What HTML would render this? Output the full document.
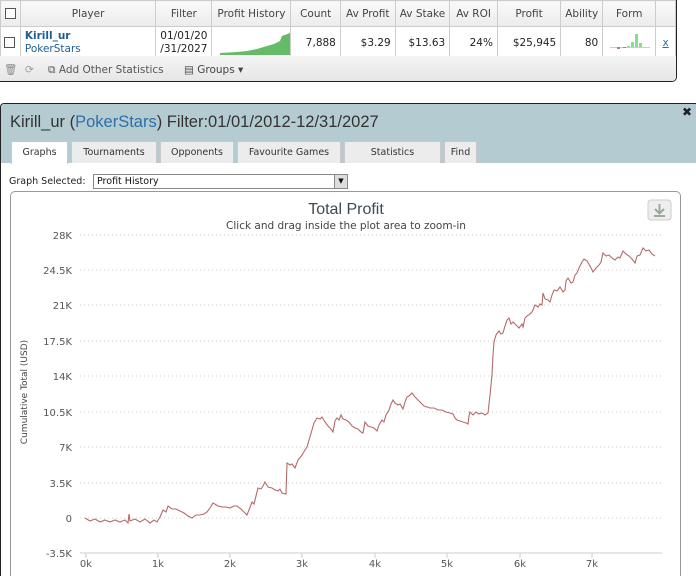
<!DOCTYPE html>
<html style="width:696px;height:576px;overflow:hidden"><head><meta charset="utf-8"><style>
*{margin:0;padding:0;box-sizing:border-box}
body{width:696px;height:576px;overflow:hidden;background:#fff;font-family:"DejaVu Sans","Liberation Sans",sans-serif;position:relative;color:#333}
.top{position:absolute;left:0;top:0;width:677px;height:82px;border:1px solid #222;border-top:none;border-left:none;border-radius:0 0 5px 0;background:#fff;overflow:hidden}
table{border-collapse:collapse;font-size:10.5px;position:absolute;left:0;top:0;table-layout:fixed}
td{border:1px solid #ccc;height:26px;padding:0 4px;white-space:nowrap;overflow:hidden}
tr.h td{background:linear-gradient(#fafafa,#ebebeb);height:26px;text-align:center;color:#444}
tr.r td{height:29px;text-align:right;color:#222}
.cb{display:inline-block;width:11px;height:11px;border:1px solid #555;background:#fff;vertical-align:middle}
.tool{position:absolute;left:0;top:56px;width:677px;height:26px;background:linear-gradient(#f4f4f4,#e6e6e6);font-size:10.5px;color:#444;line-height:28px}
.dlg{position:absolute;left:0;top:103px;width:696px;height:473px;border:1px solid #222;border-right:none;border-bottom:none;border-radius:4px 0 0 0;background:#fff;overflow:hidden}
.hdr{height:59px;background:#b5cbd2;position:relative}
.title{position:absolute;left:9px;top:9px;font-family:"Liberation Sans",sans-serif;font-size:16.5px;color:#333}
.title span{color:#2d6fa7}
.tab{position:absolute;top:37px;height:22px;background:#ececec;border:1px solid #c9c9c9;border-bottom:none;font-size:9.5px;line-height:22px;text-align:center;color:#333}
.tab.a{background:#fff;height:23px}
</style></head><body>
<div class="top">
<table>
<colgroup><col style="width:20px"><col style="width:140px"><col style="width:51px"><col style="width:78px"><col style="width:50px"><col style="width:55px"><col style="width:54px"><col style="width:48px"><col style="width:64px"><col style="width:42px"><col style="width:52px"><col style="width:20px"></colgroup>
<tr class="h"><td style="padding:0 3px"><span class="cb"></span></td><td>Player</td><td>Filter</td><td>Profit History</td><td>Count</td><td>Av Profit</td><td>Av Stake</td><td>Av ROI</td><td>Profit</td><td>Ability</td><td>Form</td><td></td></tr>
<tr class="r"><td style="padding:0 3px;text-align:left"><span class="cb"></span></td><td style="text-align:left;line-height:13px"><b style="color:#1f5e93">Kirill_ur</b><br><span style="color:#1f5e93">PokerStars</span></td><td style="text-align:left;line-height:13px">01/01/20<br>/31/2027</td><td style="padding:0"><svg width="78" height="28"><polygon points="8,26 25,25 35,24 45,22 55,19 62,17 68,14 70,9 78,6 78,28 8,28" fill="#66bb66"/></svg></td><td>7,888</td><td>$3.29</td><td>$13.63</td><td>24%</td><td>$25,945</td><td>80</td><td style="padding:0"><svg width="52" height="28"><rect x="7" y="20" width="40" height="1" fill="#ccc"/><rect x="14" y="20" width="3" height="2" fill="#b77"/><rect x="20" y="20" width="3" height="1" fill="#b77"/><rect x="24" y="19" width="3" height="1" fill="#8d8"/><rect x="28" y="15" width="3" height="5" fill="#8d8"/><rect x="32" y="7" width="3" height="13" fill="#8d8"/><rect x="36" y="16" width="3" height="4" fill="#8d8"/></svg></td><td style="text-align:center"><u style="color:#2d6fa7">x</u></td></tr>
</table>
<div class="tool"><span style="position:absolute;left:4px;color:#888">🗑</span><span style="position:absolute;left:25px;color:#999">⟳</span><span style="position:absolute;left:48px;color:#555">⧉ Add Other Statistics</span><span style="position:absolute;left:184px">▤ Groups ▾</span></div>
</div>

<div class="dlg">
<div class="hdr">
<div class="title">Kirill_ur (<span>PokerStars</span>) Filter:01/01/2012-12/31/2027</div>
<div style="position:absolute;left:681px;top:1px;font-size:12px;font-weight:bold;color:#222">✖</div>
<div class="tab a" style="left:10px;width:57px">Graphs</div>
<div class="tab" style="left:70px;width:86px">Tournaments</div>
<div class="tab" style="left:159px;width:74px">Opponents</div>
<div class="tab" style="left:236px;width:104px">Favourite Games</div>
<div class="tab" style="left:343px;width:97px">Statistics</div>
<div class="tab" style="left:443px;width:33px">Find</div>
</div>
<div style="position:absolute;left:8px;top:72px;font-size:9.5px;color:#222">Graph Selected:</div>
<div style="position:absolute;left:92px;top:70px;width:255px;height:15px;border:1px solid #888;font-size:9.5px;line-height:13px;padding-left:3px;color:#111">Profit History<span style="position:absolute;right:0;top:0;width:13px;height:13px;background:#ddd;border-left:1px solid #888;font-size:7px;text-align:center">▼</span></div>
<div style="position:absolute;left:9px;top:87px;width:671px;height:385px;border:1px solid #999;border-bottom:none;border-radius:5px 5px 0 0"></div>
</div>

<svg style="position:absolute;left:0;top:0" width="696" height="576">
<text x="346" y="214" text-anchor="middle" font-family="Liberation Sans,sans-serif" font-size="16" fill="#3d4a55">Total Profit</text>
<text x="346" y="229" text-anchor="middle" font-family="DejaVu Sans,sans-serif" font-size="10.5" fill="#444">Click and drag inside the plot area to zoom-in</text>
<rect x="648" y="200" width="23" height="20" rx="3" fill="#eee" stroke="#ccc"/>
<path d="M659.5 204v9M655 209l4.5 4.5 4.5-4.5M654 216h11" stroke="#9a9" stroke-width="2" fill="none"/>
<g stroke="#ccc" stroke-dasharray="1,3">
<line x1="80" x2="662" y1="235" y2="235"/><line x1="80" x2="662" y1="270" y2="270"/><line x1="80" x2="662" y1="305" y2="305"/><line x1="80" x2="662" y1="341" y2="341"/><line x1="80" x2="662" y1="376" y2="376"/><line x1="80" x2="662" y1="412" y2="412"/><line x1="80" x2="662" y1="447" y2="447"/><line x1="80" x2="662" y1="483" y2="483"/><line x1="80" x2="662" y1="518" y2="518"/>
</g>
<line x1="80" x2="662" y1="553" y2="553" stroke="#ccc"/>
<g stroke="#ccc"><line x1="86" x2="86" y1="553" y2="558"/><line x1="158" x2="158" y1="553" y2="558"/><line x1="230" x2="230" y1="553" y2="558"/><line x1="302" x2="302" y1="553" y2="558"/><line x1="375" x2="375" y1="553" y2="558"/><line x1="447" x2="447" y1="553" y2="558"/><line x1="520" x2="520" y1="553" y2="558"/><line x1="592" x2="592" y1="553" y2="558"/></g>
<g font-family="DejaVu Sans,sans-serif" font-size="10" fill="#555" text-anchor="end">
<text x="72" y="239">28K</text><text x="72" y="274">24.5K</text><text x="72" y="309">21K</text><text x="72" y="345">17.5K</text><text x="72" y="380">14K</text><text x="72" y="416">10.5K</text><text x="72" y="451">7K</text><text x="72" y="487">3.5K</text><text x="72" y="522">0</text><text x="72" y="557">-3.5K</text>
</g>
<g font-family="DejaVu Sans,sans-serif" font-size="10" fill="#555" text-anchor="middle">
<text x="86" y="567">0k</text><text x="158" y="567">1k</text><text x="230" y="567">2k</text><text x="302" y="567">3k</text><text x="375" y="567">4k</text><text x="447" y="567">5k</text><text x="520" y="567">6k</text><text x="592" y="567">7k</text>
</g>
<text transform="translate(27,392) rotate(-90)" text-anchor="middle" font-family="DejaVu Sans,sans-serif" font-size="9" fill="#444">Cumulative Total (USD)</text>
<polyline fill="none" stroke="#b56a6a" stroke-width="1.1" points="85,518 90,521 95,519 100,522 105,520 110,522 115,520 120,522 125,520 128,523 129,514 130,521 135,519 140,522 145,519 150,523 154,520 157,522 160,517 163,510 166,512 168,506 172,509 176,509 180,511 184,513 188,516 192,518 196,515 200,515 204,514 207,512 210,508 213,503 218,506 222,507 226,507 230,508 234,506 237,506 241,509 244,512 247,515 249,510 252,502 254,504 256,496 258,488 261,489 263,486 265,482 268,487 272,488 275,490 278,491 280,489 282,493 286,494 287,463 290,465 292,464 295,468 298,460 302,455 305,450 307,447 309,440 312,430 314,423 317,418 320,419 322,417 325,422 328,426 331,429 333,432 335,421 337,418 339,420 341,415 343,419 346,420 349,422 352,426 355,428 358,429 361,432 363,433 365,422 368,426 371,427 374,428 377,431 379,425 382,420 384,422 386,415 389,410 391,404 393,400 395,403 398,405 400,404 403,409 405,402 407,397 409,396 412,393 415,397 418,400 421,403 424,406 427,407 430,408 434,408 438,410 442,410 446,412 450,413 453,414 455,418 457,420 460,421 463,422 466,423 468,424 469,416 470,412 473,415 476,412 479,414 482,413 485,415 488,413 490,395 492,375 493,355 494,342 496,335 499,331 501,334 503,333 505,326 507,320 509,318 511,324 513,322 516,325 519,328 522,324 523,327 525,318 527,316 530,314 532,312 535,305 538,307 540,304 542,305 543,293 545,299 548,300 550,302 552,295 554,290 557,291 560,287 563,292 565,290 566,281 568,278 571,283 573,282 575,275 577,273 579,268 582,262 584,259 587,261 590,266 593,272 596,268 599,265 601,262 603,253 606,256 609,255 612,258 615,260 618,257 620,258 623,251 626,254 629,256 632,259 635,263 637,256 640,255 643,248 646,251 649,250 652,254 655,256"/>
</svg>
</body></html>
